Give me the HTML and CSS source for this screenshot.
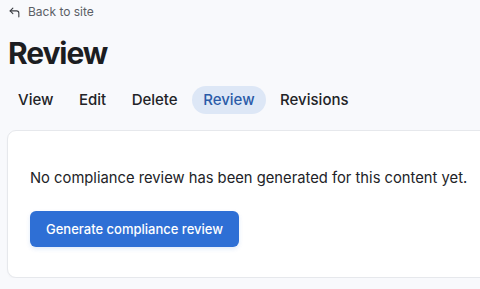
FILE: index.html
```html
<!DOCTYPE html>
<html>
<head>
<meta charset="utf-8">
<link rel="stylesheet" href="styles.css">
</head>
<body>
<div class="page">
  <a class="back" href="#">
    <svg class="back-icon" viewBox="0 0 24 24" width="13" height="13" fill="none" stroke="currentColor" stroke-width="2" stroke-linecap="round" stroke-linejoin="round"><polyline points="9 14 4 9 9 4"></polyline><path d="M20 20v-7a4 4 0 0 0-4-4H4"></path></svg>
    <span>Back to site</span>
  </a>
  <h1 class="title">Review</h1>
  <nav class="tabs">
    <a class="tab" href="#">View</a>
    <a class="tab" href="#">Edit</a>
    <a class="tab" href="#">Delete</a>
    <a class="tab active" href="#">Review</a>
    <a class="tab" href="#">Revisions</a>
  </nav>
  <section class="card">
    <p class="msg">No compliance review has been generated for this content yet.</p>
    <button class="btn">Generate compliance review</button>
  </section>
</div>
</body>
</html>
```
FILE: styles.css
```css
html, body {
  margin: 0;
  padding: 0;
  background: #f8f9fc;
  overflow: hidden;
}
body {
  font-family: Inter, "Noto Sans", sans-serif;
  color: #1f2024;
}
.page {
  padding: 4px 0 0 8px;
}
.back {
  display: flex;
  align-items: center;
  gap: 7px;
  color: #5b5f66;
  text-decoration: none;
  font-size: 12px;
  line-height: 16px;
}
.back-icon {
  color: #3a3d42;
}
.title {
  margin: 14px 0 0;
  font-size: 30px;
  line-height: 38px;
  font-weight: 700;
  letter-spacing: -1.1px;
  color: #1c1d21;
}
.tabs {
  display: flex;
  gap: 3.5px;
  margin: 14px 0 0 -1px;
}
.tab {
  padding: 4px 11px;
  line-height: 20px;
  font-size: 15px;
  font-weight: 500;
  color: #222327;
  text-decoration: none;
  border-radius: 14px;
}
.tab.active {
  background: #dde7f6;
  color: #2a5ba8;
}
.card {
  margin: 16px 0 0 -1px;
  width: 520px;
  background: #fff;
  border: 1px solid #e6e8ec;
  border-radius: 9px;
  padding: 36px 22px 30px;
  box-shadow: 0 1px 2px rgba(0,0,0,0.03);
}
.msg {
  margin: 0 0 22px;
  font-size: 14.75px;
  line-height: 22px;
  color: #222327;
}
.btn {
  display: block;
  height: 36px;
  padding: 0 16px;
  background: #2e6fd5;
  color: #fff;
  border: none;
  border-radius: 6px;
  font-family: Inter, "Noto Sans", sans-serif;
  font-size: 13px;
  font-weight: 500;
  box-shadow: 0 2px 4px rgba(46,111,213,0.15);
}
```
